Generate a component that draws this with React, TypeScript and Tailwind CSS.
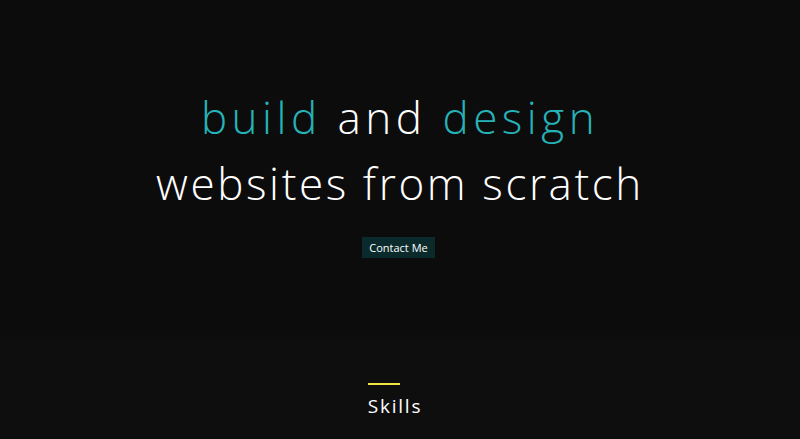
import React from 'react';

const Hero: React.FC = () => (
    <section className="h-[340px] flex flex-col items-center justify-center bg-[#0c0c0c] pt-[2px]">
        <h1 className="text-center font-light text-white text-[44px] leading-[66px] font-['Open_Sans',sans-serif]">
            <span className="tracking-[4.5px]">
                <span className="text-[#26b3b8]">build</span> and <span className="text-[#26b3b8]">design</span>
            </span>
            <br />
            <span className="tracking-[2.6px]">websites from scratch</span>
        </h1>
        <button className="mt-[21px] mr-[3px] bg-[#0b2a2b] text-white text-[11px] px-[7px] py-[4px] leading-[13px] font-['Open_Sans',sans-serif]">
            Contact Me
        </button>
    </section>
);

const Skills: React.FC = () => (
    <section className="bg-[#0e0e0e] pt-[43px] flex flex-col items-center">
        <div className="w-fit mr-[10px]">
            <span className="block w-[32px] h-[2px] bg-[#f0e040]" />
            <h2 className="mt-[8px] text-white text-[19px] tracking-[1.8px] leading-[26px] font-['Open_Sans',sans-serif]">Skills</h2>
        </div>
    </section>
);

export default function App() {
    return (
        <div className="min-h-screen bg-[#0e0e0e]">
            <Hero />
            <Skills />
        </div>
    );
}
